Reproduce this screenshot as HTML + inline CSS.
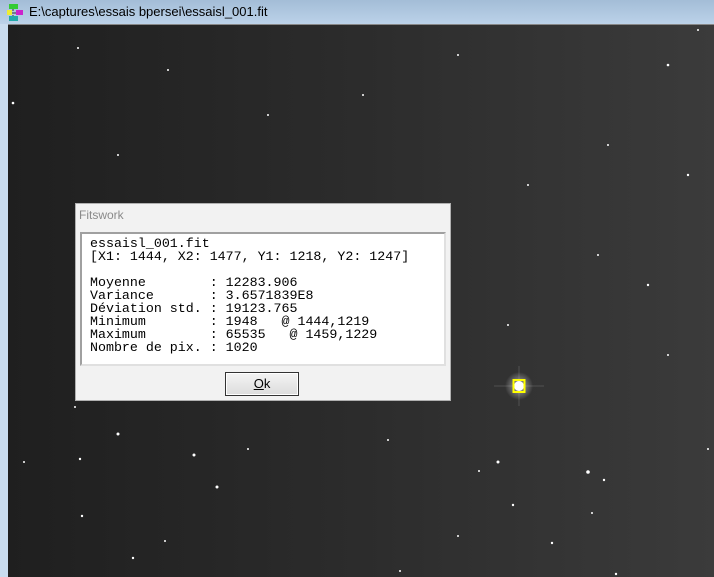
<!DOCTYPE html>
<html><head><meta charset="utf-8"><style>
body{margin:0;width:714px;height:576px;overflow:hidden;position:relative;background:#c9dcef;font-family:"Liberation Sans",sans-serif}
#title{position:absolute;left:0;top:0;width:714px;height:24px;background:linear-gradient(#a3bdd7,#bcd2e9);}
#title span{position:absolute;left:29px;top:4px;font-size:13px;color:#000}
#img{position:absolute;left:8px;top:24px;width:706px;height:552px;border-top:1px solid #888;background:linear-gradient(90deg,#1f1f1f,#2c2c2c 50%,#3b3b3b);}
#dlg{position:absolute;left:75px;top:203px;width:376px;height:198px;background:#f2f2f2;border:1px solid #b0b0b0;box-sizing:border-box}
#dlg .t{position:absolute;left:3px;top:4px;font-size:12px;color:#8a8a8a}
#box{position:absolute;left:4px;top:28px;width:366px;height:134px;background:#fff;border:2px solid #a0a0a0;border-right-color:#e0e0e0;border-bottom-color:#e0e0e0;box-sizing:border-box}
#box pre{margin:0;position:absolute;left:8px;top:3px;font-family:"Liberation Mono",monospace;font-size:13.3px;line-height:13px;color:#000}
#ok{position:absolute;left:149px;top:168px;width:74px;height:24px;border:1px solid #333;box-sizing:border-box;background:linear-gradient(#f4f4f4,#dcdcdc);font-size:13px;text-align:center;line-height:21px;box-shadow:inset 0 0 0 1px #fff}
</style></head><body>
<div id="title">
<svg style="position:absolute;left:7px;top:4px" width="18" height="17"><rect x="2" y="0" width="9" height="5" fill="#3c3"/><rect x="0" y="6" width="5" height="5" fill="#ee3"/><rect x="9" y="6" width="7" height="5" fill="#c2c"/><rect x="2" y="12" width="9" height="5" fill="#2aa"/><path d="M6 5v2M5 9h4M6 11v1" stroke="#333"/></svg>
<span>E:\captures\essais bpersei\essaisl_001.fit</span></div>
<div id="img">
<svg width="706" height="552" style="position:absolute;left:0;top:0" fill="#fff">
<defs><radialGradient id="g"><stop offset="0" stop-color="#fff" stop-opacity=".6"/><stop offset="1" stop-color="#fff" stop-opacity="0"/></radialGradient></defs>
<circle cx="5" cy="78" r="1.3"/><circle cx="70" cy="23" r="1"/><circle cx="160" cy="45" r="1"/><circle cx="355" cy="70" r="1"/><circle cx="450" cy="30" r="1"/><circle cx="660" cy="40" r="1.3"/><circle cx="690" cy="5" r="1"/><circle cx="600" cy="120" r="1"/><circle cx="520" cy="160" r="1"/><circle cx="680" cy="150" r="1.2"/><circle cx="260" cy="90" r="1"/><circle cx="110" cy="130" r="1"/><circle cx="590" cy="230" r="1"/><circle cx="640" cy="260" r="1.2"/><circle cx="500" cy="300" r="1"/><circle cx="660" cy="330" r="1"/>
<circle cx="67" cy="382" r="1"/><circle cx="110" cy="409" r="1.5"/><circle cx="72" cy="434" r="1.2"/><circle cx="186" cy="430" r="1.5"/><circle cx="240" cy="424" r="1"/><circle cx="209" cy="462" r="1.5"/><circle cx="74" cy="491" r="1.2"/><circle cx="157" cy="516" r="1"/><circle cx="125" cy="533" r="1.2"/><circle cx="173" cy="560" r="1"/><circle cx="380" cy="415" r="1"/><circle cx="490" cy="437" r="1.5"/><circle cx="580" cy="447" r="1.8"/><circle cx="596" cy="455" r="1.2"/><circle cx="471" cy="446" r="1"/><circle cx="505" cy="480" r="1.2"/><circle cx="584" cy="488" r="1"/><circle cx="544" cy="518" r="1.2"/><circle cx="450" cy="511" r="1"/><circle cx="392" cy="546" r="1"/><circle cx="608" cy="549" r="1.2"/><circle cx="700" cy="424" r="1"/><circle cx="16" cy="437" r="1"/>
<g transform="translate(511,361)"><circle r="14" fill="url(#g)"/><path d="M-25 0H25M0-20V20" stroke="#fff" stroke-opacity=".15"/><circle r="5" fill="#fff"/><rect x="-5.5" y="-6" width="11" height="12" fill="none" stroke="#ff0" stroke-width="2"/></g>
</svg></div>
<div id="dlg"><div class="t">Fitswork</div>
<div id="box"><pre>essaisl_001.fit
[X1: 1444, X2: 1477, Y1: 1218, Y2: 1247]

Moyenne        : 12283.906
Variance       : 3.6571839E8
Déviation std. : 19123.765
Minimum        : 1948   @ 1444,1219
Maximum        : 65535   @ 1459,1229
Nombre de pix. : 1020</pre></div>
<div id="ok"><u>O</u>k</div></div>
</body></html>
